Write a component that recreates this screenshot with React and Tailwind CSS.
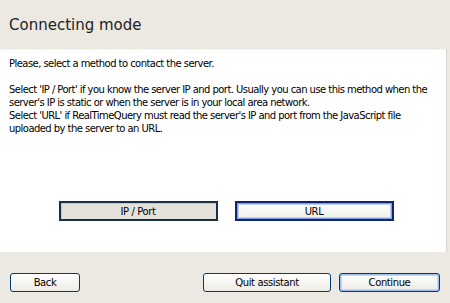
import React from "react";

const font = { fontFamily: "'DejaVu Sans', Verdana, sans-serif" };

const XpButton = ({ children, className = "", focused = false }) => (
  <button
    className={`h-[19px] rounded-[3px] border border-[#003c74] bg-gradient-to-b from-white to-[#ecebe6] text-[10px] text-black ${
      focused ? "shadow-[inset_0_0_0_1px_#9fbdeb,inset_0_0_0_2px_#c4d6f2]" : ""
    } ${className}`}
  >
    {children}
  </button>
);

export default function App() {
  return (
    <div
      className="w-[450px] h-[303px] bg-[#ece9e3] flex flex-col text-black tracking-[-0.4px]"
      style={font}
    >
      <div className="h-[49px] flex items-center pl-[9px] pt-[1px]">
        <h1 className="text-[15px] leading-none text-[#222] tracking-normal">Connecting mode</h1>
      </div>
      <div className="h-[203px] bg-white border-r border-[#d8d6cf] border-t border-t-[#f3f4ea] mr-[3px] flex flex-col">
        <div className="pl-[9px] pt-[7px] pr-[4px] text-[10px] leading-[13px] tracking-[-0.55px]">
          <p>Please, select a method to contact the server.</p>
          <p className="mt-[13px]">
            Select 'IP / Port' if you know the server IP and port. Usually you can use this method when the
            server's IP is static or when the server is in your local area network.
          </p>
          <p>
            Select 'URL' if RealTimeQuery must read the server's IP and port from the JavaScript file uploaded by
            the server to an URL.
          </p>
        </div>
        <div className="flex justify-center gap-[17px] mt-auto mb-[31px] ml-[6px]">
          <button className="w-[159px] h-[20px] border-2 border-[#1d2f44] bg-[#e4e1da] text-[10px] shadow-[inset_1px_1px_0_#c9c6bd]">
            IP / Port
          </button>
          <button className="w-[159px] h-[20px] border-2 border-[#12256a] bg-gradient-to-b from-white to-[#f1f0eb] text-[10px] shadow-[inset_0_0_0_1px_#7e9fe0,inset_0_0_0_2px_#bcd1f4]">
            URL
          </button>
        </div>
      </div>
      <div className="flex-1 flex items-start px-[10px] pt-[21px]">
        <XpButton className="w-[70px]">Back</XpButton>
        <XpButton className="w-[128px] ml-auto">Quit assistant</XpButton>
        <XpButton className="w-[101px] ml-[8px]" focused>
          Continue
        </XpButton>
      </div>
    </div>
  );
}
